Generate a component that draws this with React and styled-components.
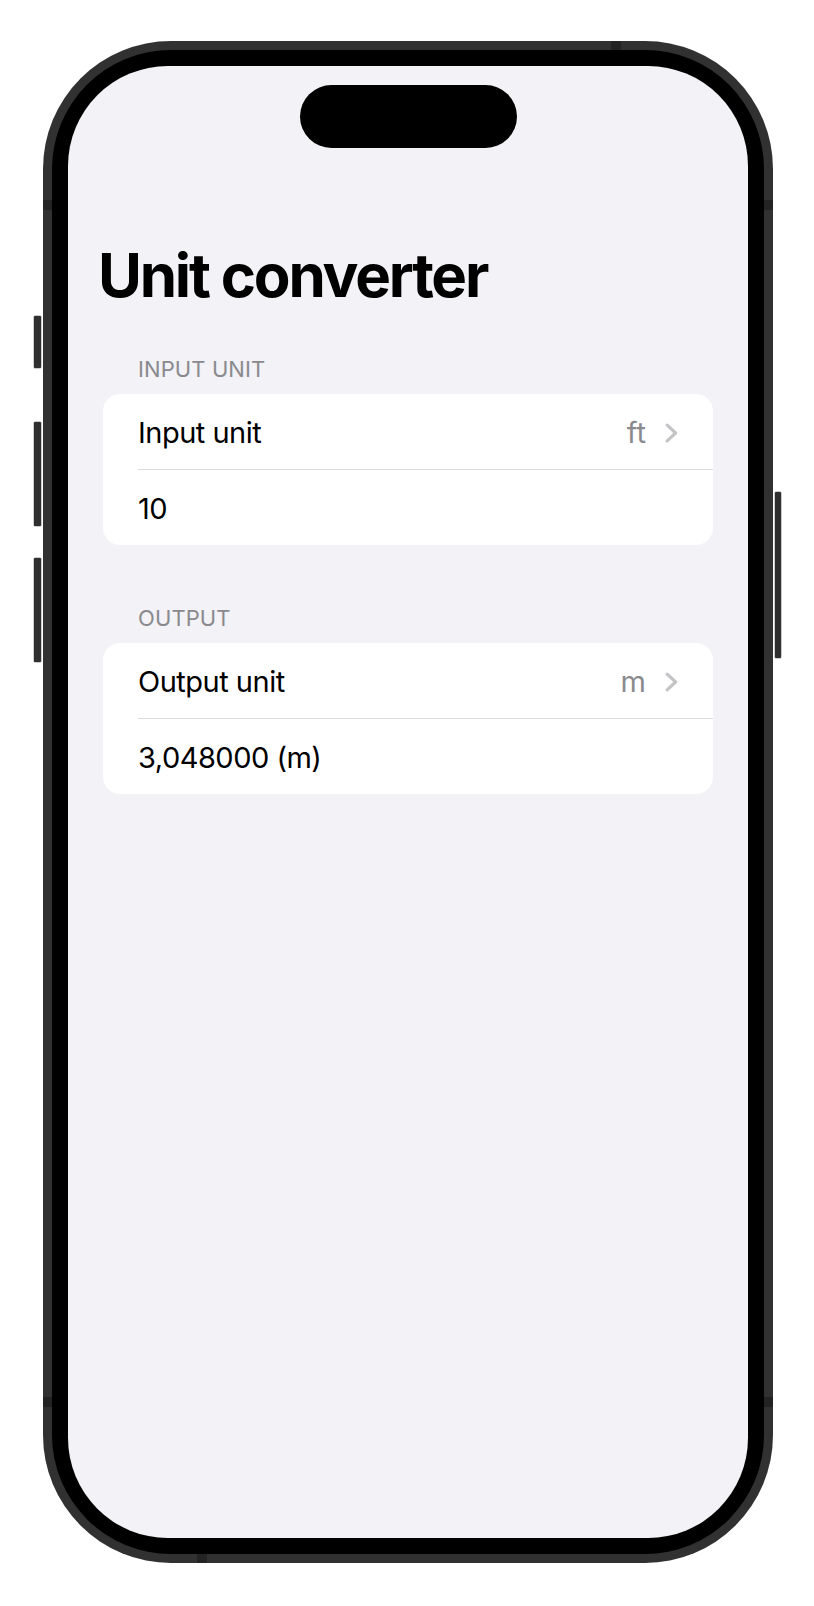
import React from "react"
import styled, { createGlobalStyle } from "styled-components"

const GlobalStyle = createGlobalStyle`
  html, body {
    margin: 0;
    padding: 0;
    background: #ffffff;
  }
  body {
    font-family: Inter, "Noto Sans", "Liberation Sans", sans-serif;
    -webkit-font-smoothing: antialiased;
  }
`

const sections = [
    { header: "INPUT UNIT", label: "Input unit", unit: "ft", value: "10" },
    { header: "OUTPUT", label: "Output unit", unit: "m", value: "3,048000 (m)" },
]

// antenna lines on the steel frame
const bands = [
    { left: 568, top: 0, width: 10, height: 9 },
    { left: 154, bottom: 0, width: 10, height: 9 },
    { left: 0, top: 159, width: 9, height: 10 },
    { left: 0, top: 1356, width: 9, height: 10 },
    { right: 0, top: 159, width: 9, height: 10 },
    { right: 0, top: 1356, width: 9, height: 10 },
]

export default function App() {
    return (
        <Page>
            <GlobalStyle />
            <LeftRail>
                <SideButton height={52} />
                <SideButton height={104} gap={54} />
                <SideButton height={104} gap={32} />
            </LeftRail>
            <Phone>
                {bands.map((b, i) => (
                    <Band key={i} style={b} />
                ))}
                <Bezel>
                    <Screen>
                        <Island />
                        <Content>
                            <Title>Unit converter</Title>
                            {sections.map((s, i) => (
                                <Section key={s.header} first={i === 0}>
                                    <Header>{s.header}</Header>
                                    <Card>
                                        <Row>
                                            <Label>{s.label}</Label>
                                            <Value>{s.unit}</Value>
                                            <Chevron />
                                        </Row>
                                        <Divider />
                                        <Row>
                                            <Label>{s.value}</Label>
                                        </Row>
                                    </Card>
                                </Section>
                            ))}
                        </Content>
                    </Screen>
                </Bezel>
            </Phone>
            <RightRail>
                <SideButton height={166} narrow />
            </RightRail>
        </Page>
    )
}

function Chevron() {
    return (
        <ChevronSvg width="13" height="20" viewBox="0 0 13 20">
            <path
                d="M2.2 2.2 L10.6 10 L2.2 17.8"
                fill="none"
                stroke="#c4c4c7"
                strokeWidth="3.2"
                strokeLinecap="round"
                strokeLinejoin="round"
            />
        </ChevronSvg>
    )
}

const Page = styled.div`
    display: flex;
    align-items: flex-start;
    width: 814px;
    height: 1606px;
    padding: 41px 0 0 34px;
    box-sizing: border-box;
    overflow: hidden;
`

const LeftRail = styled.div`
    display: flex;
    flex-direction: column;
    padding-top: 275px;
    margin-right: 2px;
`

const RightRail = styled.div`
    display: flex;
    flex-direction: column;
    padding-top: 451px;
    margin-left: 2px;
`

const SideButton = styled.div`
    width: ${(p) => (p.narrow ? 6 : 7)}px;
    height: ${(p) => p.height}px;
    margin-top: ${(p) => p.gap || 0}px;
    background: #2f2f2f;
    border-radius: 1px;
    box-shadow: 0 0 0 0.5px #9a9a9a;
`

const Phone = styled.div`
    position: relative;
    flex-shrink: 0;
    width: 730px;
    height: 1522px;
    box-sizing: border-box;
    padding: 9px;
    background: #313131;
    border-radius: 128px;
`

const Band = styled.div`
    position: absolute;
    background: #232323;
`

const Bezel = styled.div`
    width: 100%;
    height: 100%;
    box-sizing: border-box;
    padding: 16px;
    background: #000000;
    border-radius: 119px;
`

const Screen = styled.div`
    display: flex;
    flex-direction: column;
    width: 100%;
    height: 100%;
    padding-top: 19px;
    box-sizing: border-box;
    background: #f2f2f7;
    border-radius: 100px;
    overflow: hidden;
`

const Island = styled.div`
    align-self: center;
    width: 217px;
    height: 63px;
    background: #000000;
    border-radius: 32px;
`

const Content = styled.div`
    padding-top: 91px;
`

const Title = styled.h1`
    margin: 0;
    padding: 0 30px;
    font-family: Inter, "Noto Sans", sans-serif;
    font-weight: 700;
    font-size: 60px;
    line-height: 73px;
    letter-spacing: -2.2px;
    color: #000000;
`

const Section = styled.section`
    margin: ${(p) => (p.first ? "44px" : "60px")} 35px 0;
`

const Header = styled.div`
    padding-left: 35px;
    margin-bottom: 11px;
    font-size: 22px;
    line-height: 27px;
    color: #8a8a8e;
    letter-spacing: 0.1px;
`

const Card = styled.div`
    background: #ffffff;
    border-radius: 17px;
    overflow: hidden;
`

const Row = styled.div`
    display: flex;
    align-items: center;
    height: 75px;
    padding: 2px 35px 0;
    box-sizing: border-box;
`

const Label = styled.span`
    flex: 1;
    font-size: 29px;
    color: #000000;
    letter-spacing: -0.5px;
`

const Value = styled.span`
    font-size: 29px;
    color: #8a8a8e;
    margin-right: 19px;
`

const ChevronSvg = styled.svg`
    display: block;
    flex-shrink: 0;
`

const Divider = styled.div`
    height: 1px;
    margin-left: 35px;
    background: #dcdcde;
`
